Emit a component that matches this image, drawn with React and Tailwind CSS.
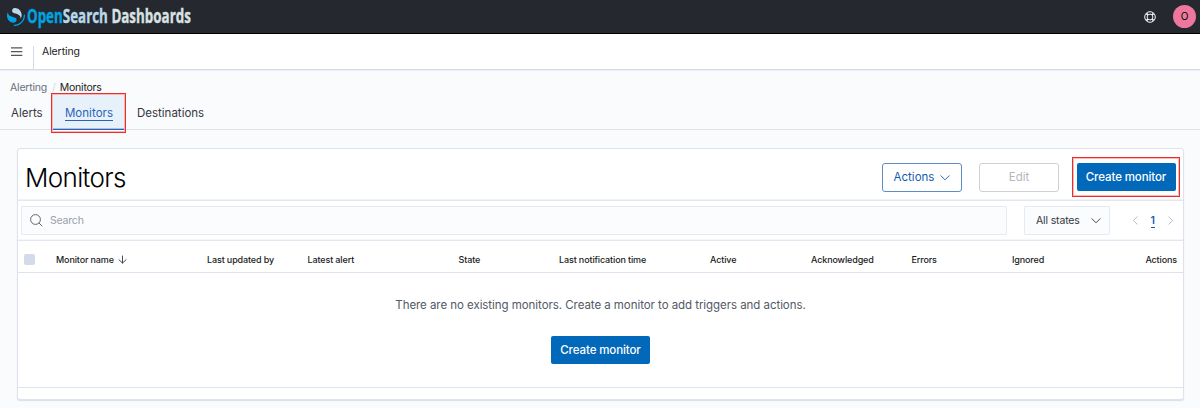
import React from 'react';

const columns = [
  'Last updated by',
  'Latest alert',
  'State',
  'Last notification time',
  'Active',
  'Acknowledged',
  'Errors',
  'Ignored',
];

function Logo() {
  return (
    <div className="flex h-[33px] items-center">
      <svg className="ml-[7px] mt-[1px] h-[18px] w-[18px]" viewBox="0 0 64 64">
        <path fill="#00A3E0" d="M61.7374 23.5C60.4878 23.5 59.4748 24.513 59.4748 25.7626C59.4748 44.3813 44.3813 59.4748 25.7626 59.4748C24.513 59.4748 23.5 60.4878 23.5 61.7374C23.5 62.987 24.513 64 25.7626 64C46.8805 64 64 46.8805 64 25.7626C64 24.513 62.987 23.5 61.7374 23.5Z" />
        <path fill="#B9D9EB" d="M48.0814 38C50.2572 34.4505 52.3615 29.7178 51.9475 23.0921C51.0899 9.36725 38.6589 -1.04463 26.9206 0.0837327C22.3253 0.525465 17.6068 4.2712 18.026 10.9805C18.2082 13.8961 19.6352 15.6169 21.9544 16.9399C24.1618 18.1992 26.9978 18.9969 30.2128 19.9011C34.0962 20.9934 38.6009 22.2203 42.063 24.7717C46.2125 27.8295 49.0491 31.3743 48.0814 38Z" />
        <path fill="#00A3E0" d="M3.91861 14C1.74276 17.5495 -0.361506 22.2822 0.0524931 28.9079C0.910072 42.6327 13.3411 53.0446 25.0794 51.9163C29.6747 51.4745 34.3932 47.7288 33.974 41.0195C33.7918 38.1039 32.3647 36.3831 30.0456 35.0601C27.8382 33.8008 25.0022 33.0031 21.7872 32.0989C17.9038 31.0066 13.3991 29.7797 9.93694 27.2283C5.78746 24.1704 2.95092 20.6257 3.91861 14Z" />
      </svg>
      <div className="ml-[2px] w-[164px] whitespace-nowrap font-['Open_Sans',sans-serif] text-[19px] font-bold leading-[33px]">
        <span className="inline-block origin-left scale-x-[0.704] text-[#D9E1E2] [-webkit-text-stroke:0.4px_currentColor]">
          <span className="text-[#00A3E0] [-webkit-text-stroke-color:#00A3E0]">Open</span>
          <span className="text-[#B9D9EB] [-webkit-text-stroke-color:#B9D9EB]">Search</span> Dashboards
        </span>
      </div>
    </div>
  );
}

function HelpIcon() {
  return (
    <svg className="h-3 w-3" viewBox="0 0 12 12" fill="none" stroke="#f2f4f7">
      <circle cx="6" cy="6" r="5.3" />
      <circle cx="6" cy="6" r="2.9" />
      <path strokeWidth="1.8" d="M2.3 2.3l1.6 1.6M9.7 2.3L8.1 3.9M2.3 9.7l1.6-1.6M9.7 9.7L8.1 8.1" />
    </svg>
  );
}

function Chevron({ className, d = 'M1 3l4.5 4.5L10 3' }) {
  return (
    <svg className={className} viewBox="0 0 11 11" fill="none" stroke="currentColor" strokeLinecap="round" strokeLinejoin="round">
      <path d={d} />
    </svg>
  );
}

export default function App() {
  return (
    <div className="flex h-[408px] w-[1200px] flex-col overflow-hidden bg-[#fafbfd] font-['Inter',sans-serif] text-[11.5px] text-[#1a1c21]">
      <header className="flex h-[34px] shrink-0 items-start justify-between border-b border-black bg-[#25282f]">
        <Logo />
        <div className="flex h-[33px] items-center pr-[4px]">
          <HelpIcon />
          <div className="ml-[17px] flex h-[23px] w-[23px] items-center justify-center rounded-full bg-[#ee789d] text-[10px] text-black">O</div>
        </div>
      </header>

      <div className="flex h-9 shrink-0 items-center border-b border-[#d5dae5] bg-white shadow-[0_1px_1px_#eceff5]">
        <svg className="ml-[11px] h-3 w-3" viewBox="0 0 12 12" stroke="#53565d" strokeWidth="1.3">
          <path d="M0 1.8h11.3M0 5.6h11.3M0 9.4h11.3" />
        </svg>
        <div className="ml-[10px] mt-[12px] h-[23px] w-px bg-[#d3dae6]" />
        <span className="ml-[8px] text-[10.5px] tracking-[-0.1px]">Alerting</span>
      </div>

      <nav className="flex h-[24px] shrink-0 items-end pl-[10px] text-[10.5px] leading-[13px] tracking-[-0.2px]">
        <span className="text-[#69707d]">Alerting</span>
        <span className="ml-[5px] mr-[4px] text-[#d3dae6]">/</span>
        <span>Monitors</span>
      </nav>

      <div className="flex h-[36px] shrink-0 border-b border-[#dde2eb] text-[11.5px] text-[#343741]">
        <span className="ml-[11px] mt-[11px] w-[40px]">Alerts</span>
        <div className="relative z-10 -mb-[4px] -mt-[1px] h-[40px] w-[75px] border border-[#ee2c2a] p-[1px] shadow-[inset_0_0_0_1px_#ee2c2a55]">
          <div className="flex h-[35px] items-center justify-center border-b border-[#2a62b8] bg-[#e6f1fa] pl-px pt-[3px] shadow-[inset_0_-1px_0_#2a62b855]">
            <span className="border-b border-[#2a62b8] leading-[13px] tracking-[0.05px] text-[#2a62b8]">Monitors</span>
          </div>
        </div>
        <span className="ml-[11px] mt-[11px]">Destinations</span>
      </div>

      <main className="ml-[17px] mt-[18px] flex h-[252px] w-[1167px] shrink-0 flex-col rounded-[3px] border border-[#dde2ec] bg-white shadow-[0_1px_1px_#d9dfe9]">
        <div className="flex h-[52px] shrink-0 items-center border-b border-[#e3e7ef] pl-[7px] pr-[3px] pt-[5px] shadow-[inset_0_-1px_0_#f1f3f7]">
          <h1 className="mt-[2px] text-[26px] font-light leading-none tracking-[-0.65px] text-black">Monitors</h1>
          <div className="ml-auto flex items-center">
            <button className="flex h-[29px] w-[80px] items-center justify-center gap-[6px] rounded-[3px] border border-[#5e8cc8] pt-px text-[#155bb2]">
              Actions
              <Chevron className="h-[10px] w-[10px]" />
            </button>
            <button className="ml-[17px] h-[29px] w-[80px] rounded-[3px] border border-[#d0d0d2] pt-px text-[#b4b6ba]">Edit</button>
            <div className="ml-[13px] flex h-[40px] w-[108px] items-center justify-center border border-[#ee2c2a] shadow-[inset_0_0_0_1px_#ee2c2a55]">
              <button className="h-[28px] w-[99px] rounded-[2px] bg-[#0268b9] pt-[2px] font-medium tracking-[-0.1px] text-white">Create monitor</button>
            </div>
          </div>
        </div>

        <div className="flex h-[40px] shrink-0 items-center border-b border-[#e3e7ef] pl-[3px] pr-[8px] shadow-[inset_0_-1px_0_#f4f6f9]">
          <div className="flex h-[29px] w-[986px] items-center rounded-[1px] border border-[#e6eaf2] bg-[#fbfcfd] pl-[8px]">
            <svg className="h-[13px] w-[13px]" viewBox="0 0 13 13" fill="none" stroke="#62666f">
              <circle cx="5.5" cy="5.5" r="4.9" />
              <path strokeLinecap="round" d="M9.1 9.1l2.9 2.9" />
            </svg>
            <span className="ml-[7px] text-[10.5px] tracking-[-0.2px] text-[#98a0ac]">Search</span>
          </div>
          <div className="ml-[17px] flex h-[29px] w-[86px] items-center justify-between rounded-[1px] border border-[#e6eaf2] bg-[#fbfcfd] pl-[11px] pr-[8px] text-[10.5px] tracking-[-0.15px] text-[#343741]">
            All states
            <Chevron className="h-[10px] w-[10px]" />
          </div>
          <div className="ml-auto flex items-center gap-[11px]">
            <Chevron className="h-[9px] w-[9px] text-[#a9adb5]" d="M7.5 1L3 5.5 7.5 10" />
            <span className="mt-[2px] border-b border-[#155bb2] text-[10.5px] font-semibold leading-[12px] text-[#155bb2]">1</span>
            <Chevron className="h-[9px] w-[9px] text-[#a9adb5]" d="M3.5 1L8 5.5 3.5 10" />
          </div>
        </div>

        <div className="grid h-[32px] shrink-0 grid-cols-[38px_151px_100.5px_151px_100.5px_151px_101px_100.5px_100.5px_1fr] items-center border-b border-[#dde3ee] pr-[6px] pt-[6px] text-[9px] font-medium tracking-[-0.13px] text-[#1a1c21]">
          <div className="ml-[6px] h-[11px] w-[11px] rounded-[2px] bg-[#d3dae8]" />
          <span className="flex items-center gap-[4px]">
            Monitor name
            <svg className="h-[9px] w-[9px]" viewBox="0 0 9 9" fill="none" stroke="#343741" strokeWidth=".9" strokeLinecap="round">
              <path d="M4.5 1v7M1 4.8L4.5 8 8 4.8" />
            </svg>
          </span>
          {columns.map((label) => (
            <span key={label} className="last:flex last:justify-between">
              {label}
              {label === 'Ignored' && <span>Actions</span>}
            </span>
          ))}
        </div>

        <div className="flex h-[115px] shrink-0 flex-col items-center border-b border-[#dde3ee]">
          <p className="mt-[24px] leading-[17px] tracking-[-0.055px] text-[#535966]">There are no existing monitors. Create a monitor to add triggers and actions.</p>
          <button className="mt-[22px] h-[28px] w-[99px] rounded-[2px] bg-[#0268b9] pt-[2px] font-medium tracking-[-0.1px] text-white">Create monitor</button>
        </div>
      </main>
    </div>
  );
}
